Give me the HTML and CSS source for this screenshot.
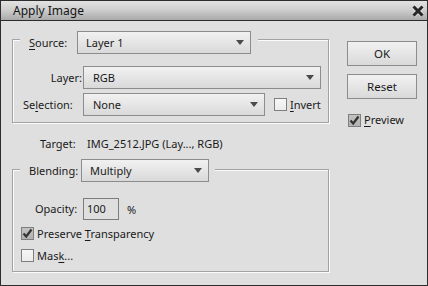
FILE: index.html
```html
<!DOCTYPE html>
<html>
<head>
<meta charset="utf-8">
<link rel="stylesheet" href="styles.css">
</head>
<body>
<div class="window">
  <div class="titlebar">
    <span class="title">Apply Image</span>
    <svg class="close" width="14" height="14" viewBox="0 0 14 14"><path d="M2.5 2.5 L11.5 11.5 M11.5 2.5 L2.5 11.5" stroke="#fff" stroke-width="4.6" stroke-opacity="0.35"/><path d="M2.5 2.5 L11.5 11.5 M11.5 2.5 L2.5 11.5" stroke="#262626" stroke-width="3"/></svg>
  </div>
  <div class="body">
    <div class="main">
      <div class="group source">
        <div class="group-head">
          <span class="lbl"><u>S</u>ource:</span>
          <div class="select w-source"><span>Layer 1</span><i class="arrow"></i></div>
        </div>
        <div class="rows">
          <span class="lbl right">Layer:</span>
          <div class="select w-layer"><span>RGB</span><i class="arrow"></i></div>
          <span class="lbl">Se<u>l</u>ection:</span>
          <div class="sel-row">
            <div class="select w-sel"><span>None</span><i class="arrow"></i></div>
            <span class="check invert"><span class="box"></span><span class="ctext"><u>I</u>nvert</span></span>
          </div>
        </div>
      </div>
      <div class="target"><span class="tlabel">Target:</span><span>IMG_2512.JPG (Lay..., RGB)</span></div>
      <div class="group blending">
        <div class="group-head">
          <span class="lbl">Blending:</span>
          <div class="select w-blend"><span>Multiply</span><i class="arrow"></i></div>
        </div>
        <div class="opacity">
          <span class="lbl">Opacity:</span>
          <div class="input">100</div>
          <span class="pct">%</span>
        </div>
        <div class="check crow"><span class="box checked"><svg width="11" height="11" viewBox="0 0 11 11"><path d="M1.5 5.5 L4.2 8.5 L9.5 1.5" fill="none" stroke="#333" stroke-width="2.2"/></svg></span><span class="ctext">Preserve <u>T</u>ransparency</span></div>
        <div class="check crow mask"><span class="box"></span><span class="ctext">Mas<u>k</u>...</span></div>
      </div>
    </div>
    <div class="side">
      <div class="btn">OK</div>
      <div class="btn reset">Reset</div>
      <div class="check preview"><span class="box checked"><svg width="11" height="11" viewBox="0 0 11 11"><path d="M1.5 5.5 L4.2 8.5 L9.5 1.5" fill="none" stroke="#333" stroke-width="2.2"/></svg></span><span class="ctext"><u>P</u>review</span></div>
    </div>
  </div>
</div>
</body>
</html>
```
FILE: styles.css
```css
* { box-sizing: border-box; }
html, body { margin: 0; padding: 0; }
body {
  font-family: "Noto Sans", "Open Sans", sans-serif;
  font-size: 11px;
  color: #1a1a1a;
  background: #dfdfdf;
}
u { text-decoration: underline; text-underline-offset: 2px; }
.window {
  width: 428px;
  height: 286px;
  border: 1px solid #2c2c2c;
  background: #dfdfdf;
  display: flex;
  flex-direction: column;
}
.titlebar {
  height: 20px;
  border-bottom: 1px solid #2c2c2c;
  background: linear-gradient(to bottom, #e2e2e2, #cfcfcf 45%, #a9a9a9);
  display: flex;
  align-items: center;
  justify-content: space-between;
  padding: 0 2px 0 12px;
}
.title { font-size: 12px; color: #141414; line-height: 19px; }
.close { display: block; }
.body {
  display: flex;
  padding-left: 11px;
  flex: 1;
}
.main { width: 318px; }
.group {
  width: 317px;
  border: 1px solid #a3a3a3;
  box-shadow: 1px 1px 0 #fbfbfb, inset 1px 1px 0 #fbfbfb;
}
.source { margin-top: 18px; padding-bottom: 6px; }
.group-head {
  display: flex;
  align-items: center;
  background: #dfdfdf;
  width: max-content;
  height: 23px;
  margin-left: 7px;
  padding: 0 7px 0 9px;
}
.source .group-head { margin-top: -9px; }
.source .group-head .lbl { width: 48px; }
.lbl { line-height: 14px; white-space: nowrap; }
.select {
  height: 23px;
  border: 1px solid #8c8c8c;
  background: linear-gradient(to bottom, #f1f1f1, #e3e3e3 60%, #d9d9d9);
  display: flex;
  align-items: center;
  justify-content: space-between;
  padding: 0 6px 0 8px;
}
.arrow {
  width: 0; height: 0;
  border-left: 4.5px solid transparent;
  border-right: 4.5px solid transparent;
  border-top: 5px solid #4a4a4a;
}
.w-source { width: 174px; }
.w-layer { width: 238px; padding-left: 9px; }
.w-sel { width: 182px; padding-left: 9px; }
.w-blend { width: 128px; }
.rows {
  display: grid;
  grid-template-columns: 60px auto;
  row-gap: 4px;
  align-items: center;
  margin-top: 12px;
  padding-left: 10px;
}
.right { text-align: right; padding-right: 1px; }
.sel-row { display: flex; align-items: center; }
.check { display: flex; align-items: center; }
.box {
  width: 13px; height: 13px;
  border: 1px solid #7f7f7f;
  background: linear-gradient(to bottom, #f6f6f6, #ececec);
  display: flex;
  align-items: center;
  justify-content: center;
}
.box.checked { background: linear-gradient(to bottom, #c2c2c2, #b2b2b2); }
.box svg { display: block; }
.ctext { margin-left: 3px; line-height: 14px; }
.invert { margin-left: 9px; }
.target {
  display: flex;
  height: 16px;
  align-items: center;
  margin-top: 12px;
  padding-left: 28px;
}
.tlabel { width: 47px; }
.blending { margin-top: 18px; padding-bottom: 9px; }
.blending .group-head { margin-top: -11px; padding-right: 6px; }
.blending .group-head .lbl { width: 52px; }
.opacity {
  display: flex;
  align-items: center;
  margin-top: 16px;
  padding-left: 22px;
}
.opacity .lbl { width: 48px; }
.input {
  width: 36px; height: 22px;
  border: 1px solid #7d7d7d;
  padding-left: 3px;
  line-height: 20px;
}
.pct { margin-left: 8px; }
.crow { margin-top: 7px; padding-left: 8px; height: 13px; }
.mask { margin-top: 9px; }
.side {
  margin-left: 17px;
  padding-top: 20px;
  width: 70px;
}
.btn {
  height: 25px;
  border: 1px solid #8c8c8c;
  background: linear-gradient(to bottom, #f1f1f1, #e3e3e3 60%, #d9d9d9);
  display: flex;
  align-items: center;
  justify-content: center;
  font-size: 11.5px;
}
.reset { margin-top: 8px; }
.preview { margin-top: 14px; margin-left: 1px; }
```
